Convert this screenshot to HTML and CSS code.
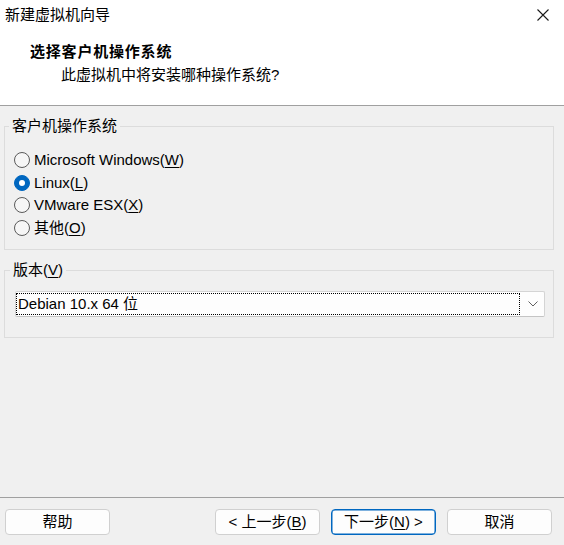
FILE: index.html
```html
<!DOCTYPE html>
<html lang="zh-CN">
<head>
<meta charset="utf-8">
<title>新建虚拟机向导</title>
<link rel="stylesheet" href="styles.css">
</head>
<body>
<div class="window">
  <div class="titlebar">
    <span class="title">新建虚拟机向导</span>
    <svg class="close" width="12" height="12" viewBox="0 0 12 12"><path d="M0.5 0.5 L11.5 11.5 M11.5 0.5 L0.5 11.5" stroke="#1a1a1a" stroke-width="1.1" fill="none"/></svg>
  </div>
  <div class="header">
    <div class="h-title">选择客户机操作系统</div>
    <div class="h-sub">此虚拟机中将安装哪种操作系统?</div>
  </div>
  <div class="content">
    <fieldset class="group group-os">
      <legend>客户机操作系统</legend>
      <label class="radio"><input type="radio" name="os"><span>Microsoft Windows(<u>W</u>)</span></label>
      <label class="radio"><input type="radio" name="os" checked><span>Linux(<u>L</u>)</span></label>
      <label class="radio"><input type="radio" name="os"><span>VMware ESX(<u>X</u>)</span></label>
      <label class="radio"><input type="radio" name="os"><span>其他(<u>O</u>)</span></label>
    </fieldset>
    <fieldset class="group group-ver">
      <legend>版本(<u>V</u>)</legend>
      <div class="combo">
        <div class="combo-value">Debian 10.x 64 位</div>
        <svg class="chev" width="10" height="6" viewBox="0 0 10 6"><path d="M0.5 0.5 L5 5 L9.5 0.5" stroke="#606060" stroke-width="1" fill="none"/></svg>
      </div>
    </fieldset>
  </div>
  <div class="footer">
    <button class="btn btn-help">帮助</button>
    <div class="spacer"></div>
    <button class="btn">&lt; 上一步(<u>B</u>)</button>
    <button class="btn btn-primary">下一步(<u>N</u>) &gt;</button>
    <button class="btn">取消</button>
  </div>
</div>
</body>
</html>
```
FILE: styles.css
```css
* { box-sizing: border-box; }
html, body { margin: 0; padding: 0; }
body {
  font-family: "Liberation Sans", "Noto Sans CJK SC", sans-serif;
  font-size: 15px;
  color: #000;
  background: #f0f0f0;
}
.window {
  width: 564px;
  height: 545px;
  display: flex;
  flex-direction: column;
  background: #f0f0f0;
  overflow: hidden;
}
.titlebar {
  height: 30px;
  background: #fff;
  display: flex;
  align-items: center;
  justify-content: space-between;
  padding: 0 15px 0 5px;
}
.title { font-size: 15px; line-height: 20px; }
.close { display: block; margin-top: -1px; }
.header {
  height: 76px;
  background: #fff;
  border-bottom: 1px solid #a0a0a0;
  padding-top: 12px;
}
.h-title {
  font-weight: bold;
  line-height: 20px;
  padding-left: 30px;
  letter-spacing: 0.8px;
}
.h-sub {
  line-height: 20px;
  padding-left: 61px;
  margin-top: 3px;
}
.content {
  flex: 1;
  padding: 10px 10px 0 4px;
}
.group {
  margin: 0;
  border: 1px solid #dcdcdc;
  min-width: 0;
}
.group legend {
  padding: 0 3px;
  margin-left: -5px;
  line-height: 20px;
}
.group-os { padding: 13px 9px 10px 9px; }
.group-ver { margin-top: 10px; padding: 11px 8px 20px 10px; }
.radio {
  display: flex;
  align-items: center;
  height: 22.5px;
  line-height: 20px;
}
.radio input {
  appearance: none;
  -webkit-appearance: none;
  margin: 0 4px 0 0;
  width: 16px;
  height: 16px;
  border-radius: 50%;
  border: 1px solid #5a5a5a;
  background: #f6f6f6;
  position: relative;
  flex: none;
}
.radio input:checked {
  background: #0067c0;
  border-color: #0067c0;
}
.radio input:checked::after {
  content: "";
  position: absolute;
  left: 4px;
  top: 4px;
  width: 6px;
  height: 6px;
  border-radius: 50%;
  background: #fff;
}
.combo {
  height: 26px;
  background: #fdfdfd;
  border: 1px solid #d4d4d4;
  border-bottom-color: #c4c4c4;
  border-radius: 2px;
  display: flex;
  align-items: center;
  padding: 1px 0 1px 0;
}
.combo-value {
  flex: 1;
  height: 22px;
  border: 1px dotted #000;
  line-height: 20px;
  padding-left: 1px;
}
.chev { margin: 0 6px 0 8px; display: block; }
.footer {
  height: 48px;
  border-top: 1px solid #a0a0a0;
  display: flex;
  align-items: flex-start;
  padding: 11px 12px 0 5px;
  gap: 11px;
}
.spacer { flex: 1; }
.btn {
  width: 105px;
  height: 26px;
  background: #fdfdfd;
  border: 1px solid #d0d0d0;
  border-radius: 4px;
  font-family: inherit;
  font-size: 15px;
  color: #000;
  padding: 0;
  line-height: 20px;
}
.btn-primary {
  border: 1px solid #0067c0;
  box-shadow: inset 0 0 0 0.5px #0067c0;
}
u { text-decoration: underline; text-underline-offset: 2px; }
```
